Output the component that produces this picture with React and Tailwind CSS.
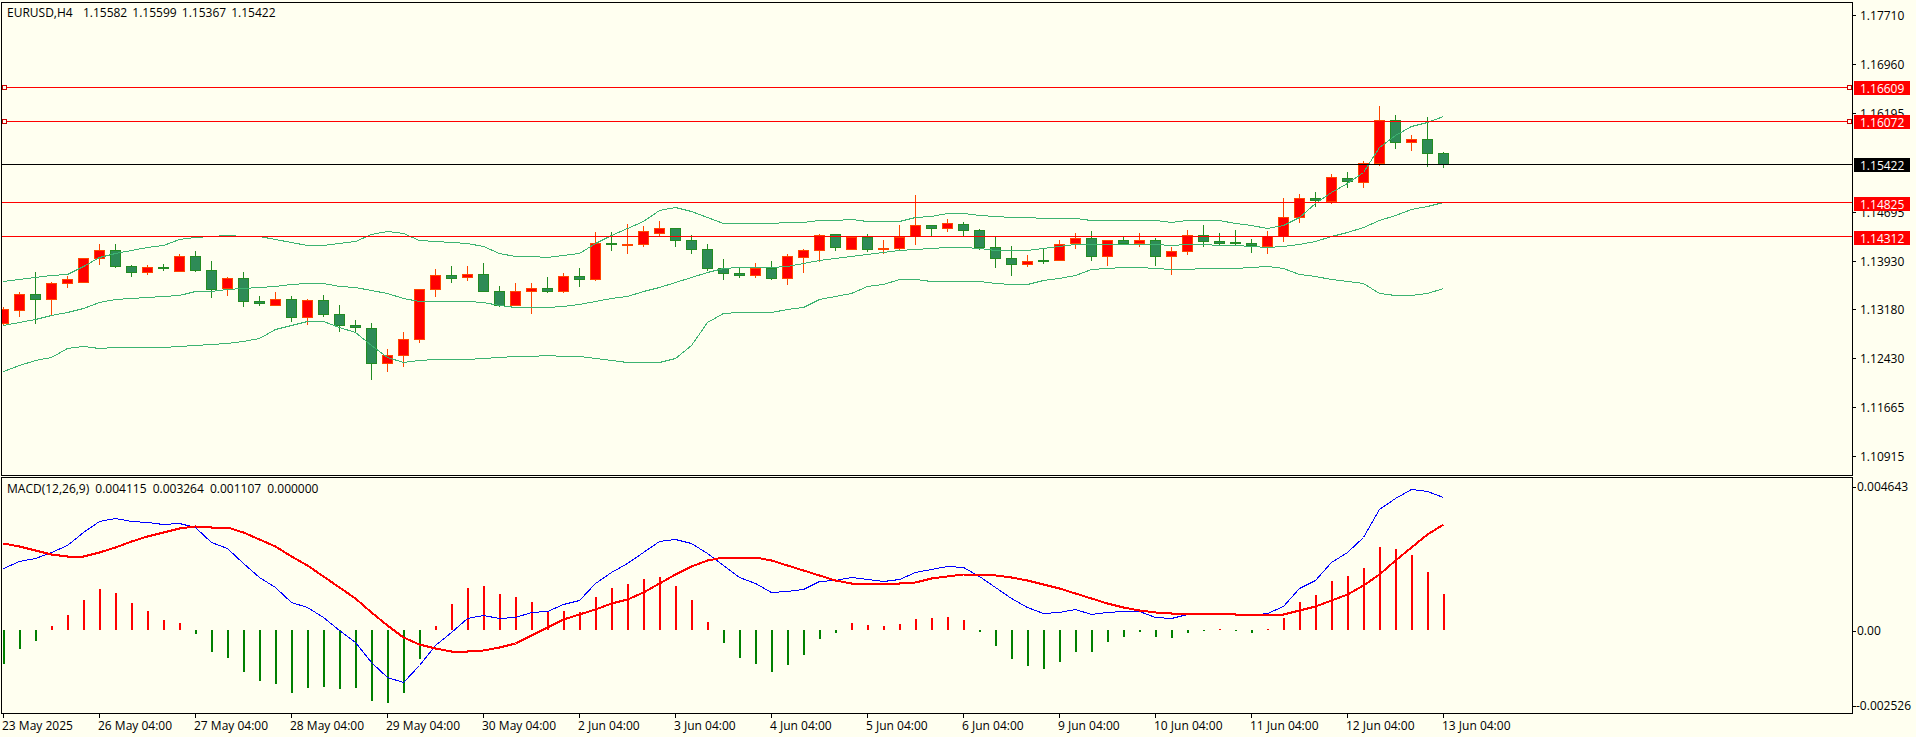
const to = (arr, off) => arr.map((v) => off + v / 3);

// [isUp, bodyTop, bodyBottom, wickTop, wickBottom] in crop units
const A = [
  [1,238,283,232,287],[1,193,242,186,260],[0,193,209,127,282],[1,160,209,157,255],[1,148,161,139,173],
  [1,85,158,85,158],[1,61,86,42,105],[0,61,110,42,113],[0,109,128,106,140],[1,112,128,105,134],
  [0,111,117,102,122],[1,79,125,72,125],[0,79,122,64,125],[0,121,180,94,203],[1,145,178,141,197],
  [0,145,215,126,230],[0,213,221,198,227],[1,208,227,186,227],[0,208,263,198,276],[1,211,263,207,285],
  [0,211,254,195,260],[0,253,287,225,305],[0,286,293,270,308],[0,295,401,279,449],[1,376,401,357,425],
  [1,328,377,306,410],[1,178,329,178,338],[1,136,179,117,200],[0,136,146,108,158],[1,133,143,108,152],
  [0,133,185,99,185],[0,184,227,168,230],[1,184,229,159,229],[1,175,185,159,251],[0,175,185,141,188],
  [1,139,185,129,188],[0,139,149,114,170],[1,40,149,7,152],[0,40,45,7,62],[1,42,45,-18,71],
];
const B = [
  [1,154,194,138,200],[1,145,161,123,168],[0,145,182,145,200],[0,181,209,165,221],[0,208,266,192,272],
  [0,265,281,237,299],[0,280,287,264,293],[1,265,287,249,293],[0,264,296,243,299],[1,229,296,223,314],
  [1,211,233,207,278],[1,166,212,163,245],[0,163,203,163,212],[1,172,209,172,209],[0,172,209,162,215],
  [1,205,209,180,221],[1,172,206,135,209],[1,136,172,45,194],[0,136,146,136,169],[1,130,146,118,155],
  [0,133,152,127,169],[0,151,205,148,209],[0,202,236,171,263],[0,235,254,198,287],[1,244,254,225,260],
  [0,240,243,208,251],[1,193,242,181,242],[1,175,193,159,206],[0,175,230,153,242],[1,181,230,181,257],
  [0,181,191,169,191],[1,181,191,159,200],[0,181,230,175,257],[1,214,230,202,284],[1,166,215,150,224],
  [0,166,185,135,200],[0,184,193,159,197],[0,187,191,151,197],[0,190,199,178,218],[1,169,200,153,221],
];
const C = [
  [1,652,710,595,725],[1,595,653,582,668],[0,595,603,576,620],[1,532,606,522,612],[0,535,546,516,564],
  [1,490,548,484,564],[1,361,491,318,497],[0,361,428,345,447],[1,418,428,405,453],[0,418,461,352,500],
  [0,460,494,457,503],
];
const scale = (rows, off) => rows.map(([u, a, b, c, d]) => ({ up: !!u, t: Math.round(off + a / 3), b: Math.round(off + b / 3), wt: Math.round(off + c / 3), wb: Math.round(off + d / 3) }));
const candles = [...scale(A, 230), ...scale(B, 180), ...scale(C, 0)];

const upper = [
  ...to([152,148,142,135,133,108,80,68,60,50,44,28,22,17,15,18,18,28,36,45,46,40,34,12,4,10,30,33,36,38,48,70,78,79,82,75,68,40,15,-5], 230),
  ...to([122,90,82,92,110,130,130,130,130,127,125,121,121,118,124,124,124,112,108,100,100,105,108,110,112,113,114,114,121,121,121,121,121,125,121,121,121,130,135,145], 180),
  ...to([675,650,610,575,548,515,440,405,378,365,349], 0),
];
const middle = [
  ...to([285,275,268,255,247,235,215,208,205,200,197,195,184,182,177,175,172,167,163,160,160,167,170,180,190,205,212,212,214,214,215,225,230,230,230,227,223,212,205,198], 230),
  ...to([333,322,305,291,277,265,262,262,262,258,250,240,233,228,222,215,211,208,205,202,202,205,211,211,211,205,198,193,193,191,191,191,193,196,193,193,194,196,199,202], 180),
  ...to([738,733,723,708,695,680,660,645,628,617,607], 0),
];
const lower = [
  ...to([422,405,390,380,355,349,353,350,350,350,350,349,345,343,340,333,323,297,285,272,274,290,305,345,380,397,390,388,388,388,383,380,379,379,376,379,379,385,391,395,397], 230),
  362, 358, 345, 322,
  ...to([400,396,396,396,388,380,358,348,338,318,312,298,298,304,304,304,304,308,313,312,300,294,286,268,265,262,262,265,268,267,265,265,265,262,259], 180),
  ...to([805,822,828,838,842,848,878,886,884,878,865], 0),
];

const hist = to([581,537,513,467,435,390,357,369,399,423,450,459,492,546,564,606,633,642,669,654,651,657,654,693,699,669,567,468,402,354,348,372,381,396,423,423,426,381,354,342,327,321,348,390,456,519,564,582,606,585,555,507,489,459,465,468,462,447,444,441,450,486,528,567,588,597,576,546,546,516,501,486,501,504,489,483,477,483,489,477,444,396,375,333,318,294,231,237,255,306,372], 470);
const macd = to([293,272,265,245,226,185,152,145,154,157,162,160,172,215,233,280,320,350,396,412,442,480,515,575,622,635,585,525,485,443,436,443,440,427,424,402,391,340,305,280,245,213,208,218,250,285,320,340,367,363,358,334,329,320,328,333,327,307,298,289,292,318,350,385,412,430,427,418,433,427,424,422,440,445,433,430,430,433,436,430,408,355,330,275,246,200,118,85,58,62,80], 470);
const signal = to([218,228,240,252,258,258,245,232,213,198,187,175,168,170,172,187,208,228,258,285,318,350,385,425,465,500,522,535,542,542,540,532,518,495,472,448,432,418,400,388,365,338,313,288,270,261,261,261,270,285,300,316,329,338,338,338,338,335,325,318,313,313,316,321,329,342,354,370,385,400,412,421,425,429,429,429,429,432,432,432,431,421,408,391,372,345,313,270,232,192,163], 470);

const col = (k) => 3 + 16 * k;
const pts = (ys) => ys.map((y, k) => `${col(k) + 0.5},${Math.round(y) + 0.5}`).join(" ");

const levels = [87, 121, 202, 236];
const handled = [87, 121];
const priceTicks = [
  ["1.17710", 15], ["1.16960", 64], ["1.16195", 113], ["1.14695", 212],
  ["1.13930", 261], ["1.13180", 309], ["1.12430", 358], ["1.11665", 407], ["1.10915", 456],
];
const priceTags = [
  ["1.16609", 81, "bg-[#ff0000]"], ["1.16072", 115, "bg-[#ff0000]"], ["1.15422", 158, "bg-black"],
  ["1.14825", 197, "bg-[#ff0000]"], ["1.14312", 231, "bg-[#ff0000]"],
];
const macdTicks = [["0.004643", 487, 5, 0], ["0.00", 630, 5, 1], ["-0.002526", 706, 4, 0]];
const dates = [
  "23 May 2025", "26 May 04:00", "27 May 04:00", "28 May 04:00", "29 May 04:00", "30 May 04:00",
  "2 Jun 04:00", "3 Jun 04:00", "4 Jun 04:00", "5 Jun 04:00", "6 Jun 04:00", "9 Jun 04:00",
  "10 Jun 04:00", "11 Jun 04:00", "12 Jun 04:00", "13 Jun 04:00",
];

function PriceChart() {
  return (
    <svg width="1850" height="472" viewBox="2 3 1850 472" className="block" shapeRendering="crispEdges">
      {candles.map((c, k) => {
        const x = col(k);
        const wick = c.up ? "#ff4500" : "#228b22";
        return (
          <g key={k}>
            <rect x={x} y={c.wt} width="1" height={Math.max(c.wb - c.wt, 1)} fill={wick} />
            <rect x={x - 4.5} y={c.t + 0.5} width="10" height={Math.max(c.b - c.t - 1, 1)} fill={c.up ? "#ff0000" : "#2e8b57"} stroke={wick} />
          </g>
        );
      })}
      {[upper, middle, lower].map((l, i) => (
        <polyline key={i} points={pts(l)} fill="none" stroke="#3cb371" strokeWidth="1" />
      ))}
      {levels.map((y) => (
        <rect key={y} x="2" y={y} width="1850" height="1" fill="#ff0000" />
      ))}
      {handled.map((y) => (
        <g key={y}>
          <rect x="2.5" y={y - 1.5} width="4" height="4" fill="#fffff0" stroke="#c80000" />
          <rect x="1847.5" y={y - 1.5} width="4" height="4" fill="#fffff0" stroke="#c80000" />
        </g>
      ))}
      <rect x="2" y="164" width="1850" height="1" fill="#000000" />
    </svg>
  );
}

function MacdChart() {
  return (
    <svg width="1850" height="235" viewBox="2 478 1850 235" className="block" shapeRendering="crispEdges">
      {hist.map((y, k) => {
        const yy = Math.round(y);
        const up = yy < 630;
        return <rect key={k} x={col(k)} y={up ? yy : 630} width="2" height={Math.max(Math.abs(630 - yy), 1)} fill={up ? "#ff0000" : "#008000"} />;
      })}
      <polyline points={pts(macd)} fill="none" stroke="#0000ff" strokeWidth="1" />
      <polyline points={pts(signal)} fill="none" stroke="#ff0000" strokeWidth="2" />
    </svg>
  );
}

export default function App() {
  return (
    <div className="w-[1916px] h-[737px] overflow-hidden bg-[#fffff0] text-black font-['Open_Sans',sans-serif] text-[12px] leading-[14px] pl-px pt-[2px] flex flex-col">
      <div className="flex h-[474px]">
        <div className="relative w-[1852px] shrink-0 border border-black">
          <PriceChart />
          <span className="absolute left-[5px] top-[3px] whitespace-pre [word-spacing:2px]">EURUSD,H4  1.15582 1.15599 1.15367 1.15422</span>
        </div>
        <div className="relative flex-1">
          {priceTicks.map(([t, y]) => (
            <div key={t} className="absolute left-0 flex items-center h-[14px]" style={{ top: y - 2 - 7 }}>
              <span className="w-[3px] h-px bg-black mr-1" />
              <span className="relative top-px">{t}</span>
            </div>
          ))}
          {priceTags.map(([t, y, c]) => (
            <div key={t} className={`absolute left-px w-[56px] h-[14px] pl-[6px] leading-[15px] text-white ${c}`} style={{ top: y - 2 }}>
              {t}
            </div>
          ))}
        </div>
      </div>
      <div className="flex h-[237px] mt-px">
        <div className="relative w-[1852px] shrink-0 border border-black">
          <MacdChart />
          <span className="absolute left-[5px] top-[4px] whitespace-pre [word-spacing:3px]">MACD(12,26,9) 0.004115 0.003264 0.001107 0.000000</span>
        </div>
        <div className="relative flex-1">
          {macdTicks.map(([t, y, g, d]) => (
            <div key={t} className="absolute left-0 flex items-center h-[14px]" style={{ top: y - 477 - 7 + d }}>
              <span className="w-[3px] h-px bg-black" style={{ marginRight: g - 4 }} />
              <span>{t}</span>
            </div>
          ))}
        </div>
      </div>
      <div className="relative h-[24px]">
        {dates.map((d, i) => (
          <div key={d} className="absolute top-0 flex flex-col items-start" style={{ left: col(i * 6) - 1 }}>
            <span className="w-px h-[4px] bg-black" />
            <span className="whitespace-pre -ml-px mt-px">{d}</span>
          </div>
        ))}
      </div>
    </div>
  );
}
